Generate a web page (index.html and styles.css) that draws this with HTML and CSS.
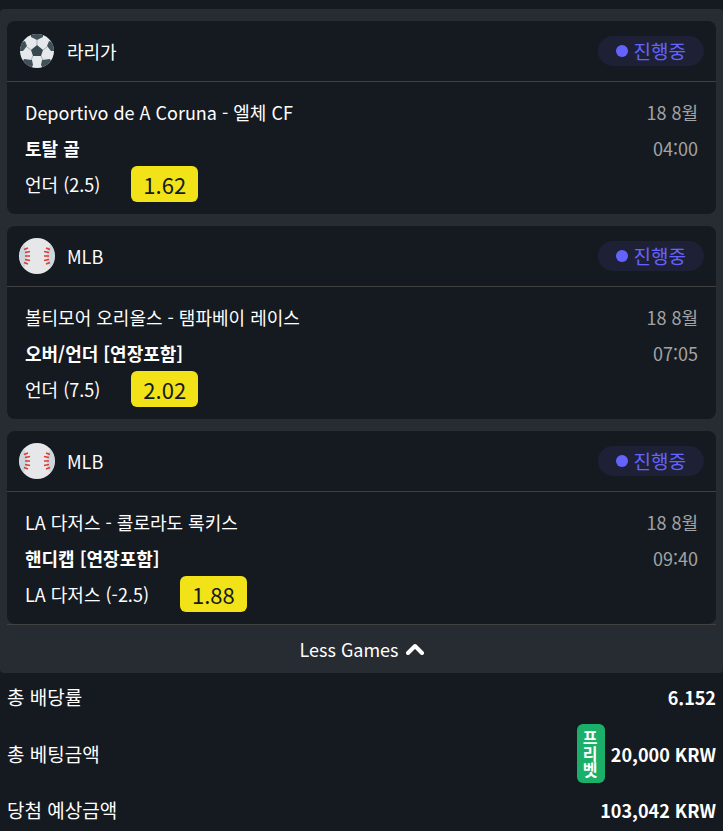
FILE: index.html
```html
<!DOCTYPE html>
<html lang="ko">
<head>
    <meta charset="UTF-8">
    <meta name="viewport" content="width=device-width, initial-scale=1.0">
    <title>베팅 내역</title>
    <link rel="stylesheet" href="styles.css">
</head>
<body>
    <svg class="sprite" aria-hidden="true">
        <symbol id="icon-soccer" viewBox="0 0 36 36">
            <clipPath id="ball"><circle cx="18" cy="18" r="17"/></clipPath>
            <circle cx="18" cy="18" r="17" fill="#e6e9ec"/>
            <g clip-path="url(#ball)" fill="#40515a">
                <path d="M18 12l6 5-2 6h-8l-2-6z" fill="#37474f"/>
                <path d="M12 0h12v4l-6 3-6-3z"/>
                <path d="M0 10l6-2 2 5-4 5H0z"/>
                <path d="M36 10l-6-2-2 5 4 5h4z"/>
                <path d="M5 26l8 1 1 5-2 4-10-4z"/>
                <path d="M31 26l-8 1-1 5 2 4 10-4z"/>
            </g>
            <path d="M18 7v5M12 17l-4-3M24 17l4-3M14 23l-2 4M22 23l2 4" stroke="#a4adb2" stroke-width="1"/>
        </symbol>
        <symbol id="icon-baseball" viewBox="0 0 36 36">
            <circle cx="18" cy="18" r="18" fill="#e6e7e8"/>
            <path d="M5 6a18 18 0 0 0 0 24q7-12 0-24zM31 6a18 18 0 0 1 0 24q-7-12 0-24z" fill="#ccd6dd"/>
            <path d="M5 11.500l4-1.500M6 14.500l5-1M6 18h5M6 21.500l5 1M5 24.500l4 1.500M31 11.500l-4-1.500M30 14.500l-5-1M30 18h-5M30 21.500l-5 1M31 24.500l-4 1.500" fill="none" stroke="#df3b2f" stroke-width="1.500"/>
        </symbol>
    </svg>

    <main class="bet-slip">
        <section class="games">
            <article class="game-card">
                <header class="game-header">
                    <svg class="sport-icon"><use href="#icon-soccer"/></svg>
                    <span class="league">라리가</span>
                    <span class="status">진행중</span>
                </header>
                <div class="game-body">
                    <div class="game-info">
                        <div>Deportivo de A Coruna - 엘체 CF</div>
                        <div class="market">토탈 골</div>
                        <div class="pick">언더 (2.5) <span class="odds">1.62</span></div>
                    </div>
                    <div class="game-time">
                        <div>18 8월</div>
                        <div>04:00</div>
                    </div>
                </div>
            </article>

            <article class="game-card">
                <header class="game-header">
                    <svg class="sport-icon"><use href="#icon-baseball"/></svg>
                    <span class="league">MLB</span>
                    <span class="status">진행중</span>
                </header>
                <div class="game-body">
                    <div class="game-info">
                        <div>볼티모어 오리올스 - 탬파베이 레이스</div>
                        <div class="market">오버/언더 [연장포함]</div>
                        <div class="pick">언더 (7.5) <span class="odds">2.02</span></div>
                    </div>
                    <div class="game-time">
                        <div>18 8월</div>
                        <div>07:05</div>
                    </div>
                </div>
            </article>

            <article class="game-card">
                <header class="game-header">
                    <svg class="sport-icon"><use href="#icon-baseball"/></svg>
                    <span class="league">MLB</span>
                    <span class="status">진행중</span>
                </header>
                <div class="game-body">
                    <div class="game-info">
                        <div>LA 다저스 - 콜로라도 록키스</div>
                        <div class="market">핸디캡 [연장포함]</div>
                        <div class="pick">LA 다저스 (-2.5) <span class="odds">1.88</span></div>
                    </div>
                    <div class="game-time">
                        <div>18 8월</div>
                        <div>09:40</div>
                    </div>
                </div>
            </article>

            <button type="button" class="toggle">
                Less Games
                <svg class="chevron" viewBox="0 0 18 12"><path d="M2 10l7-7 7 7"/></svg>
            </button>
        </section>

        <dl class="summary">
            <div class="summary-row">
                <dt>총 배당률</dt>
                <dd>6.152</dd>
            </div>
            <div class="summary-row">
                <dt>총 베팅금액</dt>
                <dd><span class="freebet">프리벳</span>20,000 KRW</dd>
            </div>
            <div class="summary-row">
                <dt>당첨 예상금액</dt>
                <dd>103,042 KRW</dd>
            </div>
        </dl>
    </main>
</body>
</html>
```

FILE: styles.css
```css
* {
    box-sizing: border-box;
}

body {
    margin: 0;
    background: #151a20;
    color: #ffffff;
    font-family: "Noto Sans CJK KR", "Noto Sans", sans-serif;
    font-size: 18px;
    line-height: 36px;
}

.sprite {
    position: absolute;
    width: 0;
    height: 0;
}

.bet-slip {
    padding-top: 9px;
}

/* games */
.games {
    display: flex;
    flex-direction: column;
    gap: 12px;
    padding: 12px 7px 0;
    background: #272b32;
    border-radius: 4px;
}

.game-card {
    background: #151a20;
    border-radius: 8px;
}

.game-header {
    display: flex;
    align-items: center;
    gap: 12px;
    height: 61px;
    padding: 0 12px;
    border-bottom: 1px solid #414141;
}

.sport-icon {
    width: 36px;
    height: 36px;
}

.status {
    display: flex;
    align-items: center;
    gap: 6px;
    height: 30px;
    margin-left: auto;
    padding: 0 18px;
    border-radius: 15px;
    background: #1e2136;
    color: #6563ff;
    font-size: 19px;
}

.status::before {
    content: "";
    width: 12px;
    height: 12px;
    border-radius: 50%;
    background: #6563ff;
}

.game-body {
    display: flex;
    justify-content: space-between;
    padding: 12px 18px;
}

.market {
    font-weight: bold;
}

.pick {
    display: flex;
    gap: 31px;
}

.odds {
    padding: 0 12px;
    border-radius: 6px;
    background: #f2e318;
    color: #151a20;
    font-size: 22px;
}

.game-time {
    color: #a2a3a5;
    text-align: right;
}

.toggle {
    display: flex;
    align-items: center;
    justify-content: center;
    gap: 7px;
    height: 49px;
    margin-top: -12px;
    padding: 0;
    border: 0;
    border-top: 1px solid #414141;
    background: none;
    color: inherit;
    font: inherit;
    cursor: pointer;
}

.chevron {
    width: 18px;
    height: 12px;
    fill: none;
    stroke: #ffffff;
    stroke-width: 4;
    stroke-linecap: round;
    stroke-linejoin: round;
}

/* totals */
.summary {
    display: flex;
    flex-direction: column;
    gap: 8px;
    margin: 0;
    padding: 5px 7px 0;
}

.summary-row {
    display: flex;
    align-items: center;
    justify-content: space-between;
    min-height: 38px;
}

.summary dt {
    font-size: 19px;
}

.summary dd {
    display: flex;
    align-items: center;
    gap: 6px;
    margin: 0;
    font-weight: bold;
}

.freebet {
    width: 28px;
    padding: 5px 6px 6px;
    border-radius: 6px;
    background: #1bb069;
    font-size: 16px;
    line-height: 16px;
    word-break: break-all;
}
```
